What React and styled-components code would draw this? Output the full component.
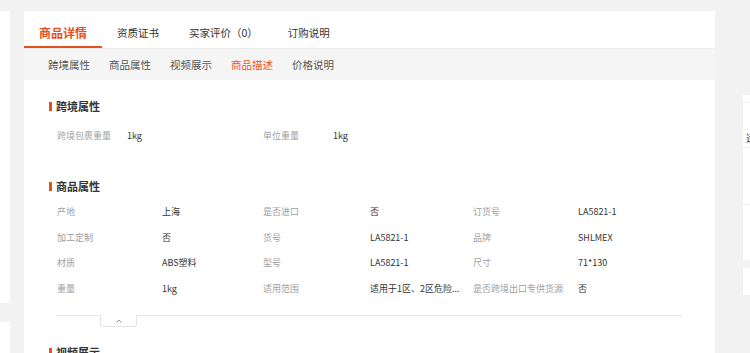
import React from 'react';
import styled, { createGlobalStyle } from 'styled-components';

const ORANGE = '#e5511d';

const GlobalStyle = createGlobalStyle`
  html, body { margin: 0; padding: 0; background: #f2f2f2; overflow: hidden; }
  body { font-family: "Noto Sans CJK SC", "Noto Sans", sans-serif; }
`;

const Page = styled.div`
  display: flex;
  align-items: flex-start;
  width: 750px;
  height: 353px;
  overflow: hidden;
`;

const LeftRail = styled.div`
  flex: 0 0 10px;
  display: flex;
  flex-direction: column;
  gap: 19px;
  padding-top: 11px;
`;

const RailCard = styled.div`
  background: #fff;
  height: ${p => p.$h}px;
`;

const Panel = styled.div`
  flex: 0 0 691px;
  margin: 11px 0 0 14px;
  height: 360px;
  background: #fff;
`;

const TabBar = styled.div`
  display: flex;
  height: 38px;
  box-sizing: border-box;
  border-bottom: 1px solid #ececec;
`;

const Tab = styled.div`
  display: flex;
  align-items: center;
  padding: 5px 15px 0;
  font-size: ${p => (p.$active ? '12px' : '10.5px')};
  font-weight: ${p => (p.$active ? 700 : 400)};
  color: ${p => (p.$active ? ORANGE : '#333')};
  box-shadow: ${p => (p.$active ? `inset 0 -2px 0 ${ORANGE}` : 'none')};
  white-space: nowrap;
`;

const SubBar = styled.div`
  display: flex;
  align-items: center;
  gap: 19px;
  height: 31px;
  padding-left: 24px;
  background: #f5f5f5;
`;

const SubTab = styled.div`
  font-size: 10.5px;
  color: ${p => (p.$active ? '#f0541e' : '#555')};
  white-space: nowrap;
`;

const Content = styled.div`
  padding: 18px 33px 0 25px;
`;

const SectionTitle = styled.div`
  display: flex;
  align-items: center;
  gap: 4px;
  height: 16px;
  margin-top: ${p => p.$mt || 0}px;
  font-size: 11px;
  font-weight: 700;
  color: #333;
  &::before {
    content: '';
    width: 3px;
    height: 9px;
    background: ${ORANGE};
  }
`;

const PropGrid = styled.div`
  display: grid;
  grid-template-columns: ${p => p.$cols};
  grid-auto-rows: ${p => p.$rowH}px;
  align-items: center;
  margin-top: ${p => p.$mt}px;
  padding-left: 8px;
  font-size: 9px;
`;

const Label = styled.div`
  color: #a0a0a0;
  white-space: nowrap;
`;

const Value = styled.div`
  color: #333;
  white-space: nowrap;
  overflow: hidden;
`;

const Divider = styled.div`
  display: flex;
  margin: 14px 0 0 7px;
`;

const Line = styled.div`
  flex: ${p => (p.$w ? `0 0 ${p.$w}px` : '1')};
  border-top: 1px solid #e6e6e6;
`;

const Toggle = styled.div`
  flex: 0 0 37px;
  height: 12px;
  box-sizing: border-box;
  border: 1px solid #e3e3e3;
  border-top: none;
  border-radius: 0 0 3px 3px;
  display: flex;
  align-items: center;
  justify-content: center;
`;

const RightRail = styled.div`
  flex: 0 0 7px;
  margin-left: 28px;
  padding-top: 95px;
  display: flex;
  flex-direction: column;
  gap: 8px;
  overflow: hidden;
`;

const RightCard = styled.div`
  width: 60px;
  height: ${p => p.$h}px;
  background: #fff;
  box-sizing: border-box;
`;

const RightRow = styled.div`
  height: ${p => p.$h}px;
  box-sizing: border-box;
  border-bottom: 1px solid #f0f0f0;
  padding: ${p => p.$pt || 0}px 0 0 3px;
  font-size: 10px;
  line-height: 14px;
  color: #333;
  white-space: nowrap;
`;

const cross = [
  ['跨境包裹重量', '1kg'],
  ['单位重量', '1kg'],
];

const attrs = [
  ['产地', '上海'], ['是否进口', '否'], ['订货号', 'LA5821-1'],
  ['加工定制', '否'], ['货号', 'LA5821-1'], ['品牌', 'SHLMEX'],
  ['材质', 'ABS塑料'], ['型号', 'LA5821-1'], ['尺寸', '71*130'],
  ['重量', '1kg'], ['适用范围', '适用于1区、2区危险...'], ['是否跨境出口专供货源', '否'],
];

export default function App() {
  return (
    <>
      <GlobalStyle />
      <Page>
        <LeftRail>
          <RailCard $h={292} />
          <RailCard $h={60} />
        </LeftRail>
        <Panel>
          <TabBar>
            <Tab $active>商品详情</Tab>
            <Tab>资质证书</Tab>
            <Tab>买家评价（0）</Tab>
            <Tab>订购说明</Tab>
          </TabBar>
          <SubBar>
            <SubTab>跨境属性</SubTab>
            <SubTab>商品属性</SubTab>
            <SubTab>视频展示</SubTab>
            <SubTab $active>商品描述</SubTab>
            <SubTab>价格说明</SubTab>
          </SubBar>
          <Content>
            <SectionTitle>跨境属性</SectionTitle>
            <PropGrid $cols="70px 136px 70px 1fr" $rowH={25} $mt={9}>
              {cross.map(([l, v]) => (
                <React.Fragment key={l}>
                  <Label>{l}</Label>
                  <Value>{v}</Value>
                </React.Fragment>
              ))}
            </PropGrid>
            <SectionTitle $mt={30}>商品属性</SectionTitle>
            <PropGrid $cols="105px 101px 107px 103px 105px 1fr" $rowH={25.5} $mt={5}>
              {attrs.map(([l, v]) => (
                <React.Fragment key={l}>
                  <Label>{l}</Label>
                  <Value>{v}</Value>
                </React.Fragment>
              ))}
            </PropGrid>
            <Divider>
              <Line $w={44} />
              <Toggle>
                <svg width="6" height="4" viewBox="0 0 6 4">
                  <polyline points="0.5,3.5 3,1 5.5,3.5" fill="none" stroke="#999" strokeWidth="1" />
                </svg>
              </Toggle>
              <Line />
            </Divider>
            <SectionTitle $mt={17}>视频展示</SectionTitle>
          </Content>
        </Panel>
        <RightRail>
          <RightCard $h={165}>
            <RightRow $h={8} />
            <RightRow $h={45} $pt={28}>适用</RightRow>
            <RightRow $h={57} />
          </RightCard>
          <RightCard $h={27} />
        </RightRail>
      </Page>
    </>
  );
}
